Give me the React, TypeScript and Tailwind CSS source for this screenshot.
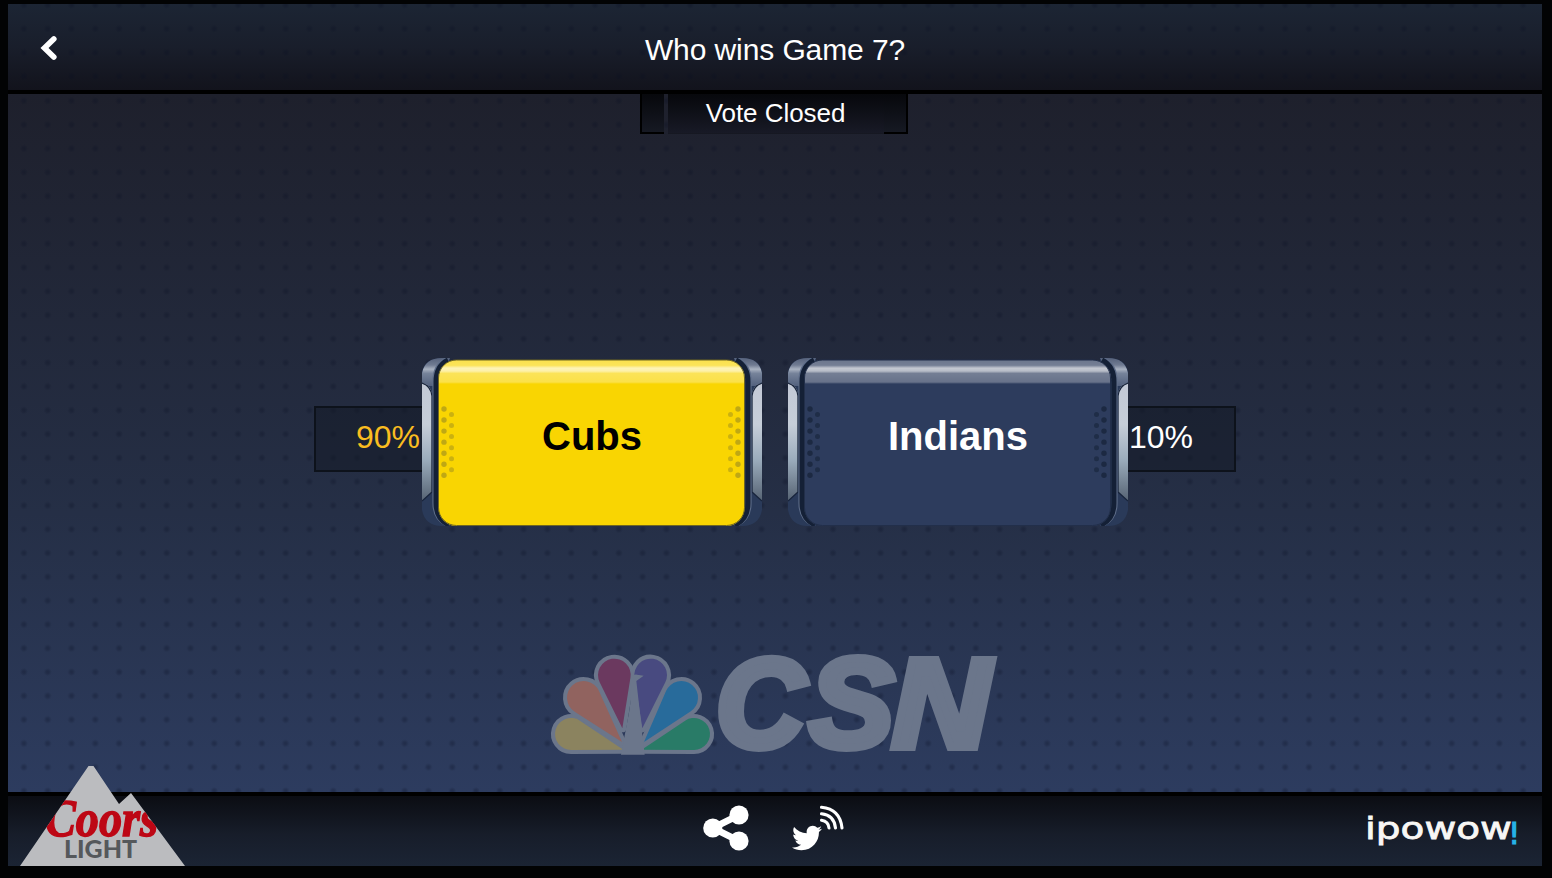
import { FaTwitter } from "react-icons/fa";

const DOTS =
  "bg-[radial-gradient(circle_at_center,rgba(8,14,34,0.3)_0,rgba(8,14,34,0.24)_1.5px,transparent_4px)] bg-size-[23.8px_23.8px]";

function petal(cx: number, cy: number, r: number, tx: number, ty: number) {
  const d = Math.hypot(tx - cx, ty - cy);
  const a = Math.atan2(ty - cy, tx - cx);
  const b = Math.acos(r / d);
  const p = (t: number) => `${cx + r * Math.cos(t)} ${cy + r * Math.sin(t)}`;
  return `M${tx} ${ty}L${p(a + b)}A${r} ${r} 0 1 1 ${p(a - b)}Z`;
}

const PETALS = [
  { d: petal(93, 282, 48, 250, 329), fill: "#8b835f" },
  { d: petal(462, 282, 48, 305, 329), fill: "#297b67" },
  { d: petal(131, 173, 50, 246, 306), fill: "#91635f" },
  { d: petal(424, 173, 50, 312, 306), fill: "#286b9b" },
  { d: petal(223, 105, 49, 247, 265), fill: "#6b395f" },
  { d: petal(332, 105, 49, 307, 265), fill: "#484a80" },
];

function CsnLogo() {
  return (
    <svg className="block h-[110px] w-[450px] overflow-visible" viewBox="0 0 450 110">
      <g transform="translate(-10 -10) scale(.33333)">
        {PETALS.map((p) => (
          <path key={p.d} d={p.d} fill="#6b768b" stroke="#6b768b" strokeWidth="24" strokeLinejoin="round" />
        ))}
        {PETALS.map((p) => (
          <path key={p.fill} d={p.d} fill={p.fill} />
        ))}
        <path d="M272 118Q278 102 291 104L311 107L289 123L314 344H243L267 218Q276 165 272 118Z" fill="#6b768b" />
      </g>
      <text
        y="97"
        fontSize="127"
        strokeWidth="8"
        className="fill-[#6b768b] stroke-[#6b768b] font-['Liberation_Sans',sans-serif] font-bold italic"
      >
        <tspan x="166" textLength="89" lengthAdjust="spacingAndGlyphs">C</tspan>
        <tspan x="259" textLength="85" lengthAdjust="spacingAndGlyphs">S</tspan>
        <tspan x="342" textLength="98" lengthAdjust="spacingAndGlyphs">N</tspan>
      </text>
    </svg>
  );
}

function SideRail() {
  return (
    <g>
      <path d="M0 14Q3 0 20 0H28V168H20Q3 168 0 152Z" fill="#2a3a59" />
      <path d="M0 28V15Q3 0 20 0H28L13 28Z" fill="url(#cap)" />
      <path d="M0 25Q10 27 10 38V134L0 143Z" fill="url(#steel)" />
      <path d="M0 25Q9 28 10 38V134L0 143" fill="none" stroke="#18243b" strokeWidth="1.3" />
      <path d="M24 1Q12 7 12 23V145Q12 161 25 167" fill="none" stroke="#5e6d89" strokeWidth="3.2" />
      <path d="M26 2Q14 8 14 24V145Q14 161 27 167" fill="none" stroke="#142036" strokeWidth="5" />
    </g>
  );
}

function Grille({ color }: { color: string }) {
  return (
    <g fill={color}>
      {[0, 1, 2, 3, 4, 5, 6].map((i) => (
        <circle key={i} cx="22" cy={51 + i * 11.05} r="2.7" />
      ))}
      {[0, 1, 2, 3, 4, 5].map((i) => (
        <circle key={i} cx="29.5" cy={56.5 + i * 11.05} r="2.5" opacity=".8" />
      ))}
    </g>
  );
}

function Choice({ label, selected }: { label: string; selected?: boolean }) {
  const grille = selected ? "#bfa814" : "#1c2942";
  return (
    <button
      className={`grid h-[168px] w-[340px] place-items-center font-bold text-[40px] leading-none ${selected ? "text-black" : "text-white"}`}
    >
      <svg className="col-start-1 row-start-1 h-[168px] w-[340px]" viewBox="0 0 340 168">
        <defs>
          <linearGradient id="steel" x1="0" y1="0" x2="0" y2="1">
            <stop offset="0" stopColor="#c3c9d6" />
            <stop offset=".35" stopColor="#c6ced9" />
            <stop offset=".65" stopColor="#9bacbc" />
            <stop offset="1" stopColor="#566373" />
          </linearGradient>
          <linearGradient id="cap" x1="0" y1="0" x2="0" y2="1">
            <stop offset="0" stopColor="#56627b" />
            <stop offset=".25" stopColor="#707b92" />
            <stop offset=".4" stopColor="#a9b2c1" />
            <stop offset=".55" stopColor="#76839a" />
            <stop offset="1" stopColor="#53617e" />
          </linearGradient>
          <linearGradient id="gloss" x1="0" y1="0" x2="0" y2="1">
            <stop offset="0" stopColor="#fff" stopOpacity=".3" />
            <stop offset=".22" stopColor="#fff" stopOpacity=".34" />
            <stop offset=".34" stopColor="#fff" stopOpacity=".72" />
            <stop offset=".46" stopColor="#fff" stopOpacity=".66" />
            <stop offset=".56" stopColor="#fff" stopOpacity=".34" />
            <stop offset=".92" stopColor="#fff" stopOpacity=".28" />
            <stop offset="1" stopColor="#fff" stopOpacity="0" />
          </linearGradient>
          <clipPath id="face">
            <rect x="16.5" y="2" width="306" height="166" rx="18" />
          </clipPath>
        </defs>
        <SideRail />
        <g transform="translate(340 0) scale(-1 1)">
          <SideRail />
        </g>
        <g clipPath="url(#face)">
          <rect x="16" y="2" width="307" height="166" fill={selected ? "#f9d502" : "#2d3c5d"} />
          <rect x="16" y="2" width="307" height="24" fill="url(#gloss)" />
        </g>
        <rect x="16.5" y="2" width="306" height="165.5" rx="18" fill="none" stroke={selected ? "#6f6621" : "#222f4a"} strokeWidth="1" />
        <Grille color={grille} />
        <g transform="translate(338 0) scale(-1 1)">
          <Grille color={grille} />
        </g>
      </svg>
      <span className="col-start-1 row-start-1 -mt-[13px]">{label}</span>
    </button>
  );
}

function ShareIcon() {
  return (
    <svg className="h-[46px] w-[46px]" viewBox="0 0 46 46" fill="#fff">
      <path d="M36 10L10 23L36 36" fill="none" stroke="#fff" strokeWidth="6.8" />
      <circle cx="9.8" cy="23" r="9.6" />
      <circle cx="36" cy="10" r="9.6" />
      <circle cx="36" cy="36" r="9.6" />
    </svg>
  );
}

function TwitterFeedIcon() {
  return (
    <svg className="h-[48px] w-[52px]" viewBox="0 0 52 48" fill="none">
      <FaTwitter x="0" y="18" size={30} color="#fff" />
      <g stroke="#fff" strokeWidth="3.1" strokeLinecap="round">
        <path d="M29.5 15.2Q36.5 16.2 37 23" />
        <path d="M29.5 8.8Q42 10 43.5 23" />
        <path d="M29.5 2.3Q48 4 50 23" />
      </g>
    </svg>
  );
}

function CoorsLogo() {
  return (
    <svg className="block h-[100px] w-[165px]" viewBox="0 0 165 100">
      <defs>
        <clipPath id="mountain">
          <path d="M0 100L68.5 0H73.5L99 38L111 27L165 100Z" />
        </clipPath>
      </defs>
      <g clipPath="url(#mountain)">
        <rect width="165" height="100" fill="#bbbcbf" />
        <text
          x="25"
          y="70"
          fontSize="53"
          textLength="113"
          lengthAdjust="spacingAndGlyphs"
          strokeWidth="1.5"
          className="fill-[#bd0715] stroke-[#bd0715] font-['Liberation_Serif',serif] font-bold italic"
        >
          Coors
        </text>
      </g>
      <text
        x="44"
        y="92"
        fontSize="24.5"
        textLength="73"
        lengthAdjust="spacingAndGlyphs"
        className="fill-[#55585b] font-[Lato,sans-serif] font-black"
      >
        LIGHT
      </text>
    </svg>
  );
}

function IpowowLogo() {
  return (
    <svg className="h-[40px] w-[154px]" viewBox="0 0 154 40">
      <text
        x="-1"
        y="29.5"
        fontSize="31"
        textLength="147"
        lengthAdjust="spacingAndGlyphs"
        strokeWidth=".8"
        className="fill-[#f8f7f5] stroke-[#f8f7f5] font-['DejaVu_Sans',sans-serif]"
      >
        ipowow
      </text>
      <text
        x="142"
        y="34.5"
        fontSize="31"
        strokeWidth="1"
        className="fill-[#26b2e6] stroke-[#26b2e6] font-['DejaVu_Sans',sans-serif]"
      >
        !
      </text>
    </svg>
  );
}

export default function App() {
  return (
    <div className="h-[878px] w-[1552px] overflow-hidden bg-[#020304] pt-1 pl-2 font-['Liberation_Sans',Arial,sans-serif] text-white">
      <div className="flex h-[862px] w-[1534px] flex-col">
        <header className="h-[90px] border-b-4 border-black bg-linear-to-b from-[#1c2534] via-[#191e2b] via-50% to-[#12131c]">
          <div className={`grid h-full grid-cols-[1fr_auto_1fr] items-center bg-position-[4px_-11px] ${DOTS}`}>
            <button className="ml-[32px] w-[18px]">
              <svg className="block h-[26px] w-[18px]" viewBox="0 0 18 26">
                <path d="M13.8 5L4.5 14L13.8 23" fill="none" stroke="#fff" strokeWidth="5.6" strokeLinecap="round" />
              </svg>
            </button>
            <h1 className="pt-[6px] text-[30px] leading-none tracking-[-0.1px]">Who wins Game 7?</h1>
          </div>
        </header>

        <main className="h-[698px] bg-linear-to-b from-[#1e202c] via-[#252f46] via-60% to-[#2d3c5f]">
          <div className={`flex h-full flex-col items-center bg-position-[4px_-5px] ${DOTS}`}>
            <div className="-ml-[2px] flex h-10 w-[268px] text-[26px] leading-none">
              <div className="w-6 border-b-2 border-l-2 border-black bg-linear-to-b from-[#07080c] to-[#161923]" />
              <div className="ml-1 flex w-[216px] items-center justify-center border-b border-[#161822] bg-linear-to-b from-[#07080c] to-[#181a26]">
                <span className="-mt-[1px] -ml-[1px] tracking-[-0.05px]">Vote Closed</span>
              </div>
              <div className="w-6 border-r-2 border-b-2 border-black bg-linear-to-b from-[#07080c] to-[#161923]" />
            </div>

            <div className="mt-[224px] flex items-start">
              <div className="mt-12 flex h-[66px] w-[108px] items-center justify-end border-2 border-r-0 border-[#0d121b] bg-[#111824]/50 pr-[2px] text-[32px] leading-none text-[#fabd20]">
                <span className="-mt-[4px]">90%</span>
              </div>
              <Choice label="Cubs" selected />
              <div className="w-[26px]" />
              <Choice label="Indians" />
              <div className="mt-12 flex h-[66px] w-[108px] items-center border-2 border-l-0 border-[#0d121b] bg-[#111824]/50 pl-[1px] text-[32px] leading-none">
                <span className="-mt-[4px]">10%</span>
              </div>
            </div>

            <div className="mt-[124px]">
              <CsnLogo />
            </div>
          </div>
        </main>

        <footer className="grid h-[74px] grid-cols-[1fr_auto_1fr] grid-rows-[70px] items-end border-t-4 border-black bg-linear-to-b from-[#0b0d13] via-[#171d2a] via-55% to-[#1b2434]">
          <div className="ml-3">
            <CoorsLogo />
          </div>
          <div className="mr-[3px] mb-[13px] flex gap-[43px]">
            <ShareIcon />
            <TwitterFeedIcon />
          </div>
          <div className="mr-[22px] mb-[17px] justify-self-end">
            <IpowowLogo />
          </div>
        </footer>
      </div>
    </div>
  );
}
